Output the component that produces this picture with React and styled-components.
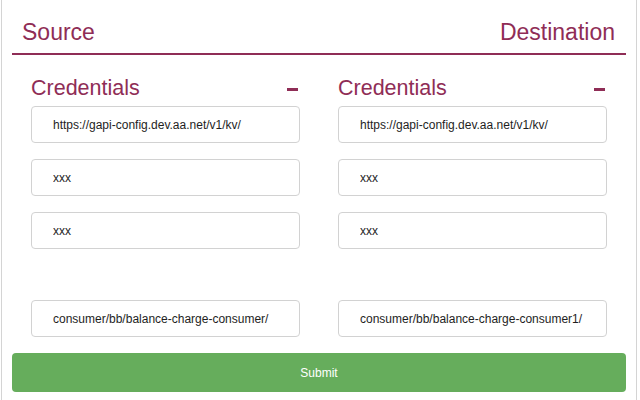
import React from "react";
import styled, { createGlobalStyle } from "styled-components";

const GlobalStyle = createGlobalStyle`
  html, body {
    margin: 0;
    padding: 0;
    background: #fff;
  }
  body {
    font-family: "Liberation Sans", Arial, sans-serif;
  }
`;

const MAROON = "#8f2d56";

const panels = [
  {
    title: "Source",
    fields: [
      "https://gapi-config.dev.aa.net/v1/kv/",
      "xxx",
      "xxx",
      "consumer/bb/balance-charge-consumer/",
    ],
  },
  {
    title: "Destination",
    fields: [
      "https://gapi-config.dev.aa.net/v1/kv/",
      "xxx",
      "xxx",
      "consumer/bb/balance-charge-consumer1/",
    ],
  },
];

const App = () => {
  return (
    <>
      <GlobalStyle />
      <Page>
        <Header>
          {panels.map((p) => (
            <Title key={p.title}>{p.title}</Title>
          ))}
        </Header>
        <Columns>
          {panels.map((p) => (
            <Column key={p.title}>
              <SectionHead>
                <SectionTitle>Credentials</SectionTitle>
                <Collapse aria-label="collapse" />
              </SectionHead>
              {p.fields.map((value, idx) => (
                <Field key={idx} defaultValue={value} spaced={idx === 3} />
              ))}
            </Column>
          ))}
        </Columns>
        <Submit>Submit</Submit>
      </Page>
    </>
  );
};

const Page = styled.div`
  margin-left: 1px;
  width: 636px;
  height: 400px;
  box-sizing: border-box;
  border-left: 1px solid #d4d4d4;
  border-right: 1px solid #d4d4d4;
  padding: 0 10px 0 10px;
`;

const Header = styled.div`
  display: flex;
  justify-content: space-between;
  align-items: flex-end;
  box-sizing: border-box;
  height: 55px;
  padding: 0 11px 9px 10px;
  border-bottom: 2px solid ${MAROON};
`;

const Title = styled.h1`
  margin: 0;
  font-size: 23px;
  font-weight: 400;
  line-height: 1;
  color: ${MAROON};
`;

const Columns = styled.div`
  display: grid;
  grid-template-columns: 1fr 1fr;
`;

const Column = styled.div`
  display: flex;
  flex-direction: column;
  padding: 24px 19px 0 19px;
`;

const SectionHead = styled.div`
  display: flex;
  justify-content: space-between;
  align-items: center;
  height: 20px;
  margin-bottom: 7px;
  padding-right: 2px;
`;

const SectionTitle = styled.h2`
  margin: 0;
  font-size: 21.5px;
  font-weight: 400;
  line-height: 1;
  color: ${MAROON};
`;

const Collapse = styled.span`
  display: block;
  width: 11px;
  height: 3px;
  background: ${MAROON};
  margin-top: 1px;
`;

const Field = styled.input`
  box-sizing: border-box;
  height: 37px;
  width: 100%;
  margin-top: ${({ spaced }) => (spaced ? "51px" : "16px")};
  &:first-of-type {
    margin-top: 0;
  }
  padding: 0 6px 0 21px;
  border: 1px solid #d2d2d2;
  border-radius: 4px;
  font-family: "Liberation Sans", Arial, sans-serif;
  font-size: 12px;
  color: #1e1e1e;
  background: #fff;
  outline: none;
`;

const Submit = styled.button`
  display: block;
  width: 100%;
  height: 39px;
  margin-top: 16px;
  border: none;
  border-radius: 4px;
  background: #66ad5c;
  color: #fff;
  font-family: "Liberation Sans", Arial, sans-serif;
  font-size: 12px;
  cursor: pointer;
`;

export default App;
